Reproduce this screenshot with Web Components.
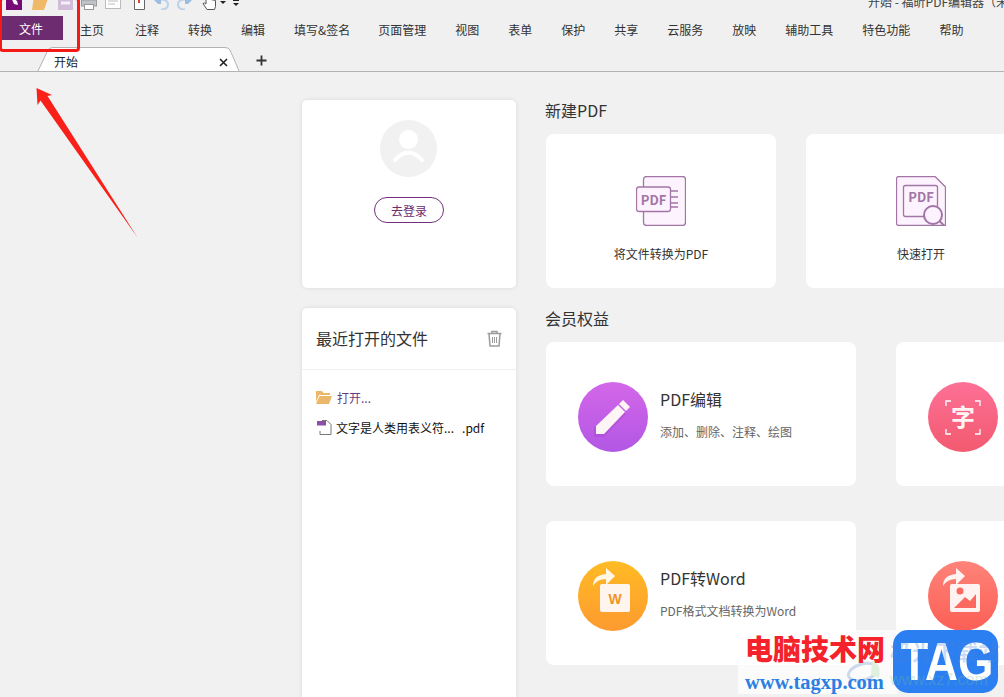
<!DOCTYPE html>
<html lang="zh-CN">
<head>
<meta charset="utf-8">
<title>福昕PDF编辑器</title>
<style>
html,body{margin:0;padding:0;width:1004px;height:697px;overflow:hidden;background:#f1f1f1;
font-family:"Noto Sans CJK SC","Liberation Sans",sans-serif;color:#333}
body{position:relative}
</style>
</head>
<body>
<app-ribbon></app-ribbon>
<app-home>
  <login-card></login-card>
  <recent-card></recent-card>
</app-home>
<mark-up></mark-up>
<water-mark></water-mark>
<script>
const def=(name,css,html)=>{
  customElements.define(name,class extends HTMLElement{
    constructor(){super();const r=this.attachShadow({mode:"open"});
      r.innerHTML=`<style>${css}</style>${typeof html==="function"?html(this):html}`;}
  });
};
const qa=`
<svg width="16" height="14" viewBox="0 0 16 14" style="margin:0 0 2px 6px"><rect width="16" height="14" fill="#780a78"/><path d="M5 1l6 4 1 4-4-1z" fill="#fff"/></svg>
<svg width="17" height="14" viewBox="0 0 17 14" style="margin:0 0 2px 10px"><path d="M2 0h15l-5 14H0z" fill="#f0b968"/></svg>
<svg width="15" height="14" viewBox="0 0 15 14" style="margin:0 0 2px 9px"><rect width="15" height="14" fill="#d1bcd9"/><rect x="3" y="5.500" width="9" height="3" fill="#f4f0f5"/></svg>
<svg width="16" height="16" viewBox="0 0 16 16" style="margin:0 0 1px 8px"><rect x="3" y="0" width="10" height="6" fill="#cfdcea" stroke="#a9b6c4"/><rect x=".5" y="5" width="15" height="6" fill="#bfc3c8" stroke="#9a9ea3"/><rect x="3.500" y="9.500" width="9" height="5" fill="#fff" stroke="#999"/></svg>
<svg width="16" height="12" viewBox="0 0 16 12" style="margin:0 0 3px 8px"><rect x=".5" y="-4" width="15" height="15.500" fill="#fff" stroke="#bbb"/><path d="M3 1h10M3 4h10M3 7h7" stroke="#bbb"/></svg>
<svg width="12" height="15" viewBox="0 0 12 15" style="margin:0 0 2px 12px"><path d="M1.500 0v14.500h10V4" fill="#fff" stroke="#666"/><path d="M6 1l3 3H7v4H5V4H3z" fill="#e2432d"/></svg>
<svg width="16" height="11" viewBox="0 0 16 11" style="margin:0 0 2px 8px"><path d="M8 .5q7 0 7 5t-7 5" fill="none" stroke="#bcd2e8" stroke-width="2"/><path d="M0 0h8v5L5 5z" fill="#9dbde0"/></svg>
<svg width="16" height="11" viewBox="0 0 16 11" style="margin:0 0 2px 8px"><path d="M8 .5q-7 0-7 5t7 5" fill="none" stroke="#bcd2e8" stroke-width="2"/><path d="M16 0H8v5l3 0z" fill="#9dbde0"/></svg>
<svg width="16" height="16" viewBox="0 0 16 16" style="margin:0 0 1px 9px"><path d="M4-2h2.500v6l7 1.500v6l-1 3H5L1 8.500l1.500-.5L4 9z" fill="#fff" stroke="#555"/></svg>
<svg width="6" height="3" viewBox="0 0 6 3" style="margin:0 0 8px 2px"><path d="M0 0h6L3 3z" fill="#222"/></svg>
<svg width="6" height="6" viewBox="0 0 6 6" style="margin:0 0 6px 7px"><path d="M0 .5h6" stroke="#222"/><path d="M0 3h6L3 6z" fill="#222"/></svg>`;
const menu=["主页","注释","转换","编辑","填写&签名","页面管理","视图","表单","保护","共享","云服务","放映","辅助工具","特色功能","帮助"];
def("app-ribbon",`
:host{display:block;height:72px;box-sizing:border-box;border-bottom:1px solid #b3b3b3;background:#f0f0f0;font-size:12px;overflow:hidden}
.qa{height:12px;display:flex;align-items:flex-end;overflow:hidden;position:relative}
.qa svg{flex:none;display:block}
.title{margin-left:auto;white-space:nowrap;width:136px;flex:none;color:#444;line-height:18px;height:18px;overflow:hidden;margin-bottom:1px}
.menu{height:24px;margin-top:4px;display:flex;align-items:center;gap:29px;padding-left:2px;color:#333;white-space:nowrap}
.menu span:not(.file){padding-top:2px}
.file{width:61px;height:24px;box-sizing:border-box;padding-right:3px;background:#6d2c6f;color:#fff;display:flex;align-items:center;justify-content:center;margin-right:-12px}
.tabs{height:24px;margin-top:7px;display:flex;align-items:flex-end;position:relative}
.tab{margin-left:37px;width:203px;height:24px;position:relative;display:flex;align-items:center;padding-left:17px;box-sizing:border-box;color:#222}
.tab svg.bg{position:absolute;left:0;top:0}
.tab span{position:relative;top:2px}
.tab .x{position:absolute;left:182px;top:11px}
.plus{margin:2px 0 0 16px;align-self:center}
`,`
<div class="qa">${qa}<span class="title">开始 - 福昕PDF编辑器（未</span></div>
<div class="menu"><span class="file">文件</span>${menu.map((m,i)=>`<span style="${i==0?"margin-right:2px":i==4?"margin-right:-1px":""}">${m}</span>`).join("")}</div>
<div class="tabs"><div class="tab">
<svg class="bg" width="203" height="25" viewBox="0 0 203 25"><path d="M.5 25L11 3Q12.500 .5 16 .5H188Q191.500 .5 193 3L202.500 25" fill="#fff" stroke="#b3b3b3"/></svg>
<span>开始</span>
<svg class="x" width="9" height="9" viewBox="0 0 9 9"><path d="M1 1l7 7M8 1L1 8" stroke="#222" stroke-width="1.600"/></svg>
</div>
<svg class="plus" width="11" height="11" viewBox="0 0 11 11"><path d="M5.500 .5v10M.5 5.500h10" stroke="#333" stroke-width="1.800"/></svg>
</div>`);

def("app-home",`
:host{display:flex;align-items:flex-start;padding:28px 0 0 302px;gap:30px;height:625px;box-sizing:border-box;overflow:hidden}
.left{width:214px;flex:none;display:flex;flex-direction:column;gap:20px}
.right{flex:none;width:700px}
`,`<div class="left"><slot></slot></div>
<div class="right">
<section-title>新建PDF</section-title>
<div style="display:flex;gap:30px">
<new-card label="将文件转换为PDF" icon="a"></new-card>
<new-card label="快速打开" icon="b"></new-card>
</div>
<section-title style="margin-top:20px">会员权益</section-title>
<div style="display:grid;grid-template-columns:310px 310px;gap:35px 40px">
<perk-card head="PDF编辑" sub="添加、删除、注释、绘图" icon="edit"></perk-card>
<perk-card icon="ocr"></perk-card>
<perk-card head="PDF转Word" sub="PDF格式文档转换为Word" icon="word"></perk-card>
<perk-card icon="img"></perk-card>
</div>
</div>`);

def("section-title",`
:host{display:block;font-size:16px;line-height:20px;height:34px;color:#333;margin-left:-1px}
`,`<slot></slot>`);

def("login-card",`
:host{display:flex;flex-direction:column;align-items:center;height:188px;box-sizing:border-box;padding-top:20px;background:#fff;border-radius:5px;box-shadow:0 0 4px rgba(0,0,0,.1)}
.btn{margin-top:20px;width:70px;height:26px;box-sizing:border-box;border:1px solid #71317a;border-radius:13px;color:#6d2c6f;font-size:12px;display:flex;align-items:center;justify-content:center}
svg{display:block;margin-left:-1px}
`,`<svg width="57" height="57" viewBox="0 0 57 57"><circle cx="28.500" cy="28.500" r="28.500" fill="#f1f1f1"/><circle cx="28.500" cy="19.500" r="9.500" fill="#fff"/><path d="M15 40q13.500-15 27 0" fill="none" stroke="#fff" stroke-width="4" stroke-linecap="round"/></svg>
<div class="btn">去登录</div>`);

def("recent-card",`
:host{display:block;height:400px;background:#fff;border-radius:5px;box-shadow:0 0 4px rgba(0,0,0,.1)}
.head{height:62px;box-sizing:border-box;border-bottom:1px solid #f0f0f0;padding:0 14px;display:flex;align-items:center;justify-content:space-between;font-size:16px;color:#333}
.head span{margin-top:-2px}
.list{padding-top:12px;font-size:12px}
.row{height:30px;display:flex;align-items:center;padding-left:14px;white-space:pre}
svg{display:block;flex:none}
`,`<div class="head"><span>最近打开的文件</span>
<svg width="15" height="17" viewBox="0 0 15 17"><path d="M5 3V1.500h5V3M.5 3.500h14M2 4l1 12h9l1-12" fill="none" stroke="#9c9c9c" stroke-width="1.500"/><path d="M5.500 7v6M7.500 7v6M9.500 7v6" stroke="#9c9c9c"/></svg></div>
<div class="list">
<div class="row" style="color:#6d3a80"><svg width="16" height="14" viewBox="0 0 16 14" style="margin-right:5px"><path d="M0 1h6l1.500 2H14v2H3L0 12z" fill="#ebb76a"/><path d="M3.500 6H16l-3 8H0z" fill="#ebb76a"/></svg>打开...</div>
<div class="row" style="color:#111"><svg width="15" height="15" viewBox="0 0 15 15" style="margin:0 4px 0 1px"><path d="M5 .5h5L14 4.500v10H3V11" fill="#fff" stroke="#777"/><rect x="0" y="1" width="9" height="4.500" fill="#8c4fa8"/></svg>文字是人类用表义符...   .pdf</div>
</div>`);

const newIcons={
a:`<svg width="50" height="50" viewBox="0 0 50 50"><rect x="7.500" y=".5" width="42" height="49" rx="3" fill="#fdf3fe" stroke="#a275a6" stroke-width="1.300"/><path d="M35 15h7M35 21h7M35 27h7M35 31h7" stroke="#a275a6" stroke-width="1.300"/><rect x=".5" y="11" width="34" height="24.500" rx="2.500" fill="#fdf3fe" stroke="#a275a6" stroke-width="1.300"/><text x="17.500" y="28.500" text-anchor="middle" font-size="13" font-weight="700" fill="#a275a6" font-family="Noto Sans CJK SC">PDF</text></svg>`,
b:`<svg width="50" height="50" viewBox="0 0 50 50"><path d="M3 .5h36L49.500 11v38.500H3Q.5 49.500.5 47V3Q.5.5 3 .5z" fill="#fdf3fe" stroke="#a275a6" stroke-width="1.300"/><rect x="7.500" y="9.500" width="34" height="31" rx="2" fill="#fdf3fe" stroke="#a275a6" stroke-width="1.300"/><text x="25" y="26" text-anchor="middle" font-size="13" font-weight="700" fill="#a275a6" font-family="Noto Sans CJK SC">PDF</text><circle cx="37" cy="39" r="9" fill="#fdf3fe" stroke="#a275a6" stroke-width="2"/><path d="M43.500 45l4.500 4.500" stroke="#a275a6" stroke-width="2"/></svg>`};
customElements.define("new-card",class extends HTMLElement{
  connectedCallback(){
    if(this.shadowRoot)return;
    const r=this.attachShadow({mode:"open"});
    r.innerHTML=`<style>
:host{display:flex;flex-direction:column;align-items:center;flex:none;width:230px;height:154px;box-sizing:border-box;padding-top:42px;background:#fff;border-radius:8px;font-size:12px;color:#333}
svg{display:block}
span{margin-top:19px;line-height:18px;white-space:nowrap}
</style>${newIcons[this.getAttribute("icon")]}<span>${this.getAttribute("label")}</span>`;
  }
});

const arrow=c=>`<path d="M15 25q0-11 13-12V7l9 8-9 9v-6q-9 0-13 7z" fill="${c}"/>`;
const perkIcons={
edit:`<svg width="70" height="70" viewBox="0 0 70 70"><defs><linearGradient id="g" x1="0" y1="0" x2="0" y2="1"><stop offset="0" stop-color="#d367e9"/><stop offset="1" stop-color="#b257e4"/></linearGradient></defs><circle cx="35" cy="35" r="35" fill="url(#g)"/><path d="M16 46L40 24l8 8-22 23H16z" fill="#a23fc9" opacity=".35"/><path d="M18 44L40 23l7 7-21 22H18z" fill="#fdf4f6"/><path d="M41 22l4-4 7 7-4 4z" fill="#fdf4f6"/></svg>`,
ocr:`<svg width="70" height="70" viewBox="0 0 70 70"><defs><linearGradient id="g" x1="0" y1="0" x2="0" y2="1"><stop offset="0" stop-color="#fd7096"/><stop offset="1" stop-color="#f25a6f"/></linearGradient></defs><circle cx="35" cy="35" r="35" fill="url(#g)"/><path d="M18 24v-5h5M52 24v-5h-5M18 47v5h5M52 47v5h-5" fill="none" stroke="#fff" stroke-width="1.300"/><text x="35" y="44" text-anchor="middle" font-size="24" font-weight="700" fill="#fff3f3" font-family="Noto Sans CJK SC">字</text></svg>`,
word:`<svg width="70" height="70" viewBox="0 0 70 70"><defs><linearGradient id="g" x1="0" y1="0" x2="0" y2="1"><stop offset="0" stop-color="#ffbb24"/><stop offset="1" stop-color="#fd9a30"/></linearGradient></defs><circle cx="35" cy="35" r="35" fill="url(#g)"/>${arrow("#fff6e6")}<rect x="22" y="23" width="30" height="28" rx="2" fill="#fff5ef"/><text x="37" y="43" text-anchor="middle" font-size="14" font-weight="700" fill="#f39224" font-family="Liberation Sans">W</text></svg>`,
img:`<svg width="70" height="70" viewBox="0 0 70 70"><defs><linearGradient id="g" x1="0" y1="0" x2="0" y2="1"><stop offset="0" stop-color="#fe8379"/><stop offset="1" stop-color="#fc5f55"/></linearGradient></defs><circle cx="35" cy="35" r="35" fill="url(#g)"/>${arrow("#fff2f0")}<rect x="22" y="23" width="30" height="28" rx="2" fill="#fff2f0"/><circle cx="32" cy="30" r="3.500" fill="#fc6a5f"/><path d="M26 47l11-11 5 4 6-7v14z" fill="#fc6a5f"/></svg>`};
customElements.define("perk-card",class extends HTMLElement{
  connectedCallback(){
    if(this.shadowRoot)return;
    const r=this.attachShadow({mode:"open"});
    const h=this.getAttribute("head");
    r.innerHTML=`<style>
:host{display:flex;align-items:flex-start;gap:12px;height:144px;box-sizing:border-box;padding:40px 0 0 32px;background:#fff;border-radius:8px}
svg{display:block;flex:none}
.h{font-size:16px;line-height:24px;margin-top:5px;color:#333;white-space:nowrap}
.s{font-size:12px;line-height:18px;margin-top:12px;color:#666;white-space:nowrap}
</style>${perkIcons[this.getAttribute("icon")]}${h?`<div><div class="h">${h}</div><div class="s">${this.getAttribute("sub")}</div></div>`:""}`;
  }
});

def("mark-up",`
:host{position:absolute;left:0;top:0;width:160px;height:245px;pointer-events:none}
.box{position:absolute;left:-1px;top:-3px;width:81px;height:55px;box-sizing:border-box;border:3px solid #f41a18;border-radius:4px}
svg{position:absolute;left:0;top:0}
`,`<div class="box"></div>
<svg width="160" height="245" viewBox="0 0 160 245"><path d="M36.500 88L52 95l-4.500 1 90 141.500L40.500 100.500 37.500 105z" fill="#f9201a"/></svg>`);

def("water-mark",`
:host{position:absolute;left:738px;top:630px;width:266px;height:67px;overflow:hidden}
.band{position:absolute;left:0;top:0;width:160px;height:64px;background:rgba(255,255,255,.72)}
.red{position:absolute;left:7px;top:0;font-size:28px;line-height:36px;font-weight:900;color:#f4222b;white-space:nowrap}
.blue{position:absolute;left:7px;top:40px;font:700 20.500px/24px "Liberation Serif",serif;color:#2b7fe3;white-space:nowrap}
.swirl{position:absolute;left:108px;top:26px;opacity:.7}
.tag{position:absolute;left:155px;top:0;width:105px;height:63px;background:#2c7ff1;border-radius:15px;color:#fff;font:700 53px/63px "Liberation Sans",sans-serif;text-align:center}
.tag span{display:inline-block;transform:scaleX(.86)}
.f1{position:absolute;left:152px;top:6px;font-size:22px;line-height:28px;color:rgba(70,130,220,.28);white-space:nowrap;font-weight:700}
.f2{position:absolute;left:152px;top:40px;font:16px/20px "Liberation Sans",sans-serif;color:rgba(120,190,150,.3);white-space:nowrap}
`,`<div class="band"></div>
<svg class="swirl" width="40" height="30" viewBox="0 0 40 30"><ellipse cx="17" cy="16" rx="15" ry="8" fill="none" stroke="#b9cde6" stroke-width="3" transform="rotate(-15 17 16)"/><path d="M26 5q10 3 7 17l-8-3z" fill="#d5ecd5"/></svg>
<div class="red">电脑技术网</div>
<div class="blue">www.tagxp.com</div>
<div class="tag"><span>TAG</span></div>
<div class="f1">极光下载站</div>
<div class="f2">www.xz7.com</div>`);
</script>
</body>
</html>
